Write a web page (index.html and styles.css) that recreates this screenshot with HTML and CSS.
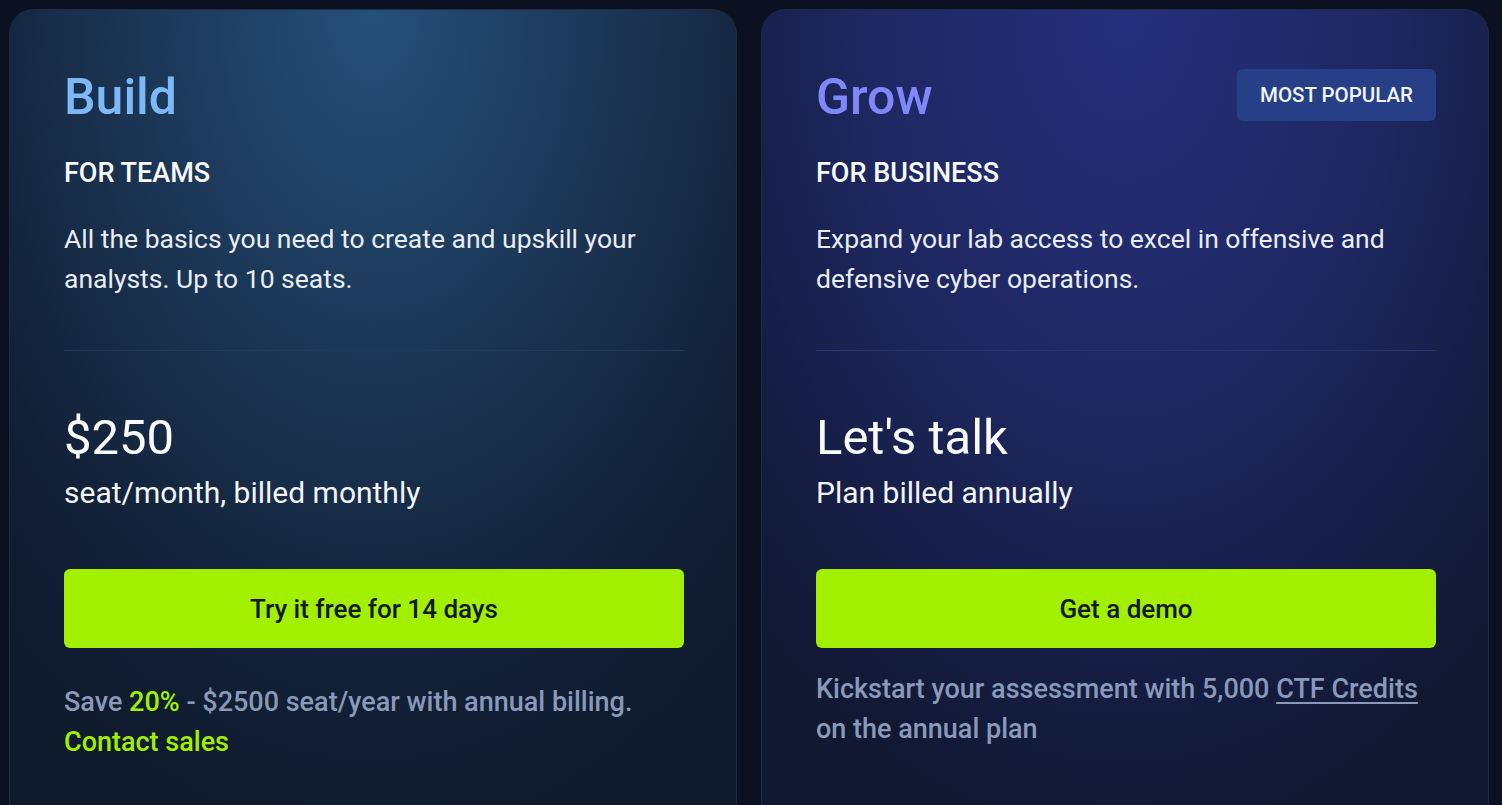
FILE: index.html
```html
<!DOCTYPE html>
<html lang="en">
<head>
<meta charset="utf-8">
<title>Pricing</title>
<link rel="stylesheet" href="styles.css">
</head>
<body>
<main class="plans">
  <section class="card card-build">
    <div class="card-head">
      <h2 class="title title-build">Build</h2>
    </div>
    <div class="audience">FOR TEAMS</div>
    <p class="desc">All the basics you need to create and upskill your analysts. Up to 10 seats.</p>
    <hr class="divider">
    <div class="price">$250</div>
    <div class="price-note">seat/month, billed monthly</div>
    <a class="cta" href="#">Try it free for 14 days</a>
    <p class="foot foot-build">Save <span class="hl">20%</span> - $2500 seat/year with annual billing. <br><a class="hl-link" href="#">Contact sales</a></p>
  </section>
  <section class="card card-grow">
    <div class="card-head">
      <h2 class="title title-grow">Grow</h2>
      <span class="badge">MOST POPULAR</span>
    </div>
    <div class="audience">FOR BUSINESS</div>
    <p class="desc">Expand your lab access to excel in offensive and defensive cyber operations.</p>
    <hr class="divider divider-grow">
    <div class="price">Let's talk</div>
    <div class="price-note">Plan billed annually</div>
    <a class="cta" href="#">Get a demo</a>
    <p class="foot">Kickstart your assessment with 5,000 <a class="ul-link" href="#">CTF Credits</a> on the annual plan</p>
  </section>
</main>
</body>
</html>
```
FILE: styles.css
```css
* { box-sizing: border-box; }
html, body { margin: 0; padding: 0; }
body {
  background: #0b1120;
  font-family: Roboto, "Liberation Sans", sans-serif;
  color: #f1f5f9;
  height: 805px;
  overflow: hidden;
}
.plans {
  display: grid;
  grid-template-columns: 728px 728px;
  gap: 24px;
  padding: 9px 0 0 9px;
}
.card {
  border: 1px solid #1d2b47;
  border-radius: 25px;
  padding: 61px 52px 120px 54px;
  min-height: 860px;
  display: flex;
  flex-direction: column;
}
.card-build {
  background: radial-gradient(ellipse 75% 95% at 50% 0%, #25507a 0%, #1b3554 45%, #122037 80%, #0f1a2d 100%);
}
.card-grow {
  background: radial-gradient(ellipse 75% 95% at 50% 0%, #262f7c 0%, #1f2863 45%, #151d43 80%, #111832 100%);
}
.card-head {
  display: flex;
  justify-content: space-between;
  align-items: flex-start;
  height: 52px;
}
.title {
  margin: 0;
  font-size: 50px;
  line-height: 52px;
  font-weight: 500;
}
.title-build { color: #7cb9f6; }
.title-grow { color: #8088f7; }
.badge {
  margin-top: -2px;
  background: #263f87;
  color: #f1f5f9;
  font-size: 20.5px;
  font-weight: 500;
  line-height: 52px;
  height: 52px;
  padding: 0 23px;
  border-radius: 6px;
}
.audience {
  margin-top: 34px;
  font-size: 27px;
  line-height: 32px;
  font-weight: 500;
  color: #f8fafc;
}
.desc {
  margin: 30px 0 0;
  font-size: 26.5px;
  line-height: 40px;
  color: #e8edf5;
}
.divider {
  margin: 51px 0 0;
  border: 0;
  height: 1px;
  background: #213a5a;
}
.divider-grow { background: #28336f; }
.price {
  margin-top: 59px;
  font-size: 49px;
  line-height: 56px;
  font-weight: 400;
  color: #f8fafc;
}
.price-note {
  margin-top: 9px;
  font-size: 30px;
  line-height: 36px;
  color: #f1f5f9;
}
.cta {
  margin-top: 58px;
  height: 79px;
  display: flex;
  align-items: center;
  justify-content: center;
  background: #a2ef00;
  color: #111827;
  border-radius: 6px;
  font-size: 26px;
  font-weight: 500;
  text-decoration: none;
}
.foot {
  margin: 21px 0 0;
  font-size: 27px;
  line-height: 40px;
  font-weight: 500;
  color: #8899b9;
}
.foot-build { margin-top: 34px; }
.hl { color: #a2ef00; }
.hl-link { color: #a2ef00; text-decoration: none; }
.ul-link { color: #8899b9; text-decoration: underline; text-underline-offset: 4px; text-decoration-thickness: 2px; }
```
